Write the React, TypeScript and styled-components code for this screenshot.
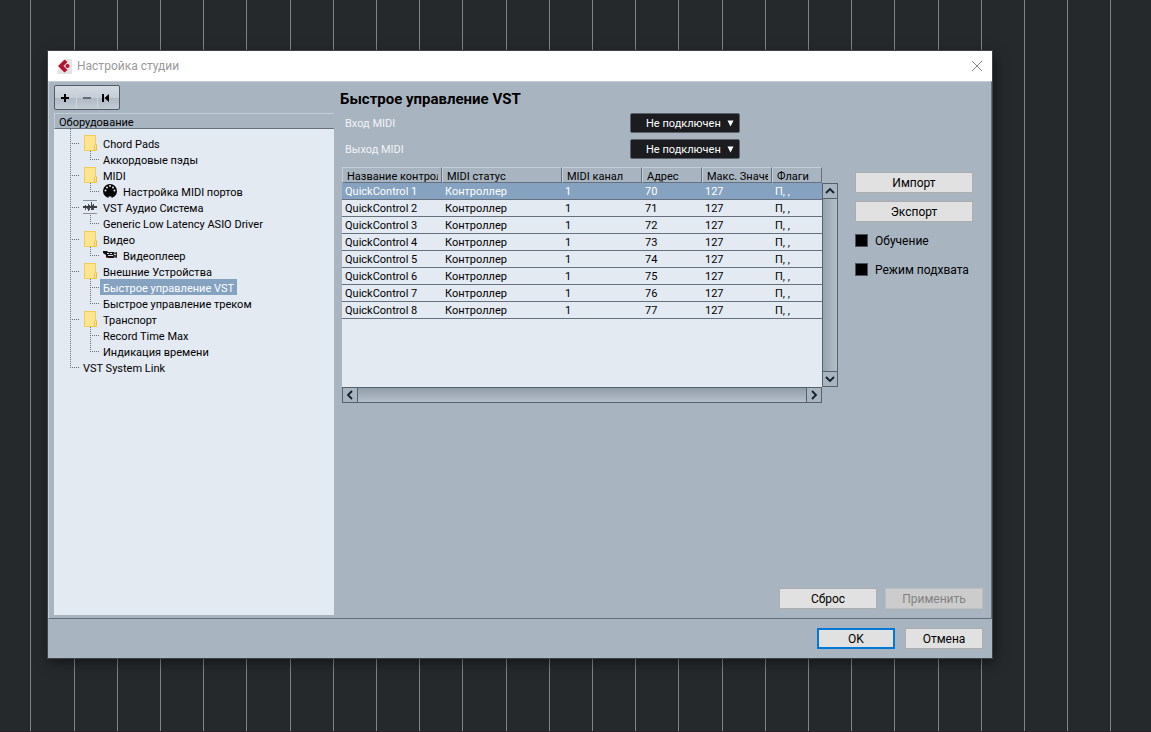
import React from "react";
import styled, { createGlobalStyle, css } from "styled-components";

const color = {
  panel: "#a8b4c0",
  field: "#e3eaf2",
  selected: "#85a2c0",
  light: "#c4ced8",
  dark: "#66717d",
};

const GlobalStyle = createGlobalStyle`
  * { box-sizing: border-box; }
  body {
    margin: 0;
    background: #25292c;
    color: #000;
    font-family: Roboto, "Noto Sans", sans-serif;
    font-size: 11px;
    line-height: 16px;
  }
  button, input, select { font: inherit; margin: 0; }
  ul { list-style: none; margin: 0; padding: 0; }
`;

const Desktop = styled.div`
  display: flex;
  min-height: 100vh;
  padding: 51px 159px 73px 48px;
  border-bottom: 1px solid #2c1e22;
  background: repeating-linear-gradient(
    to right,
    #808386 0 1px, transparent 1px 44px,
    #808386 44px 45px, transparent 45px 87px,
    #808386 87px 88px, transparent 88px 130px,
    #808386 130px 131px, transparent 131px 173px,
    #808386 173px 174px, transparent 174px 216px
  ) 30px 0 / 216px 100% repeat-x;
`;

const Dialog = styled.main`
  flex: 1;
  min-width: 0;
  display: flex;
  flex-direction: column;
  background: ${color.panel};
  box-shadow: 0 0 0 1px #3f4144, 2px 4px 12px rgba(0, 0, 0, 0.5);
`;

const TitleBar = styled.header`
  display: flex;
  align-items: center;
  height: 30px;
  padding: 0 9px;
  background: #fff;
`;

const Caption = styled.h1`
  flex: 1;
  margin: 0 0 0 5px;
  font-size: 12px;
  font-weight: 400;
  color: #999;
`;

const CloseButton = styled.button`
  display: flex;
  padding: 0;
  border: 0;
  background: none;
`;

const Body = styled.div`
  flex: 1;
  display: flex;
  gap: 6px;
  padding: 3px 8px 3px 5px;
  border: 1px solid ${color.light};
  border-right-color: ${color.dark};
  border-bottom-color: ${color.dark};
`;

const Sidebar = styled.section`
  display: flex;
  flex-direction: column;
  width: 280px;
`;

const Toolbar = styled.div`
  display: flex;
  align-self: flex-start;
  height: 25px;
  margin-bottom: 3px;
  border: 1px solid #525a64;
  border-radius: 2px;
  background: linear-gradient(#d3dae2, #c5cdd7 50%, #b0b9c4 54%, #c3cbd5);
`;

const ToolButton = styled.button`
  display: flex;
  align-items: center;
  justify-content: center;
  width: 21px;
  padding: 0;
  border: 0;
  background: none;
  & + & { border-left: 1px solid #cdd4dc; }
  &:last-child { width: 22px; padding-right: 6px; }
`;

const TreeHeading = styled.h2`
  height: 16px;
  margin: 0;
  padding-left: 4px;
  border: 1px solid ${color.light};
  border-right: 0;
  border-bottom-color: ${color.dark};
  font-size: 11px;
  line-height: 18px;
  font-weight: 400;
`;

const TreeBox = styled.div`
  flex: 1;
  padding-left: 16px;
  background: ${color.field};
`;

const dotsDown = "repeating-linear-gradient(to bottom, #66717d 0 1px, transparent 1px 2px)";
const dotsRight = "repeating-linear-gradient(to right, #66717d 0 1px, transparent 1px 2px)";

const TreeTop = styled.div`
  height: 6px;
  background: ${dotsDown} 0 0 / 1px 100% no-repeat;
`;

const TreeRow = styled.li`
  display: flex;
  height: 16px;
`;

const Trunk = styled.span`
  width: 20px;
  background: ${dotsDown} 0 0 / 1px 100% no-repeat;
`;

const Branch = styled.span<{ $last?: boolean }>`
  width: 10px;
  background:
    ${dotsDown} 0 0 / 1px ${(p) => (p.$last ? "9px" : "100%")} no-repeat,
    ${dotsRight} 0 8px / 100% 1px no-repeat;
`;

const IconSlot = styled.span`
  display: flex;
  width: 20px;
  padding-left: 3px;
  svg { display: block; }
`;

const NodeLabel = styled.span<{ $selected?: boolean }>`
  padding: 0 3px;
  white-space: nowrap;
  line-height: 20px;
  ${(p) => p.$selected && css`
    background: ${color.selected};
    color: #fff;
  `}
`;

const Content = styled.section`
  flex: 1;
  min-width: 0;
  display: flex;
  flex-direction: column;
`;

const PageTitle = styled.h2`
  margin: 4px 0;
  font-size: 15px;
  line-height: 20px;
  font-weight: 700;
`;

const Field = styled.div`
  display: flex;
  align-items: center;
  height: 20px;
  margin-bottom: 6px;
  padding-left: 5px;
`;

const FieldLabel = styled.label`
  width: 285px;
  padding-top: 2px;
  color: #f1f3f5;
`;

const SelectBox = styled.div`
  position: relative;
  width: 110px;
  height: 20px;
  svg {
    position: absolute;
    right: 6px;
    top: 7px;
    pointer-events: none;
  }
`;

const Select = styled.select`
  appearance: none;
  display: block;
  width: 100%;
  height: 100%;
  padding: 2px 0 0 15px;
  border: 1px solid #5a6067;
  border-radius: 2px;
  background: #1a1c20;
  color: #fff;
`;

const Columns = styled.div`
  display: flex;
  gap: 17px;
  margin-top: 2px;
  padding: 0 10px 0 2px;
`;

const ListFrame = styled.div`
  flex: 1;
  min-width: 0;
  display: grid;
  grid-template-columns: minmax(0, 1fr) 16px;
`;

const ListView = styled.div`
  height: 220px;
  background: ${color.field};
`;

const Table = styled.table`
  width: 100%;
  table-layout: fixed;
  border-collapse: separate;
  border-spacing: 0;
`;

const HeadCell = styled.th<{ $width?: number }>`
  width: ${(p) => (p.$width ? `${p.$width}px` : "auto")};
  height: 16px;
  padding: 0 3px 0 4px;
  overflow: hidden;
  white-space: nowrap;
  text-align: left;
  font-weight: 400;
  line-height: 14px;
  background: ${color.panel};
  border: 1px solid ${color.light};
  border-right-color: ${color.dark};
  border-bottom-color: ${color.dark};
  span { display: block; overflow: hidden; line-height: 18px; height: 14px; }
`;

const BodyRow = styled.tr<{ $selected?: boolean }>`
  ${(p) => p.$selected && css`
    background: ${color.selected};
    color: #fff;
  `}
`;

const Cell = styled.td`
  height: 17px;
  padding: 2px 3px 0;
  line-height: 14px;
  white-space: nowrap;
  border-bottom: 1px solid ${color.dark};
`;

const ScrollTrack = styled.div<{ $vertical?: boolean }>`
  display: flex;
  justify-content: space-between;
  border: 1px solid #57616c;
  ${(p) => p.$vertical
    ? css`
        flex-direction: column;
        margin-top: 16px;
        background: linear-gradient(to right, #97a3af, #b4bfca);
      `
    : css`
        height: 16px;
        background: linear-gradient(#919da9, #b4bfca);
      `}
`;

const ScrollButton = styled.button<{ $edge: "top" | "bottom" | "left" | "right" }>`
  display: flex;
  align-items: center;
  justify-content: center;
  width: ${(p) => (p.$edge === "left" || p.$edge === "right" ? "15px" : "14px")};
  height: ${(p) => (p.$edge === "left" || p.$edge === "right" ? "14px" : "15px")};
  padding: 0;
  border: 0 solid #57616c;
  background: #a8b4c0;
  ${(p) => p.$edge === "top" && "border-bottom-width: 1px;"}
  ${(p) => p.$edge === "bottom" && "border-top-width: 1px;"}
  ${(p) => p.$edge === "left" && "border-right-width: 1px;"}
  ${(p) => p.$edge === "right" && "border-left-width: 1px;"}
`;

const Side = styled.div`
  display: flex;
  flex-direction: column;
  gap: 8px;
  width: 118px;
  padding-top: 5px;
`;

const PushButton = styled.button<{ $width?: number; $primary?: boolean }>`
  width: ${(p) => (p.$width ? `${p.$width}px` : "100%")};
  height: 21px;
  padding: 0;
  border: ${(p) => (p.$primary ? "2px solid #0078d7" : "1px solid #adadad")};
  background: #e1e1e1;
  color: #000;
  font-size: 12px;
  line-height: 16px;
  &:disabled {
    border-color: #bfbfbf;
    background: #ccc;
    color: #838383;
  }
`;

const CheckLabel = styled.label`
  display: flex;
  align-items: center;
  gap: 7px;
  height: 21px;
  font-size: 12px;
  white-space: nowrap;
`;

const CheckBox = styled.input`
  appearance: none;
  flex: none;
  width: 13px;
  height: 13px;
  border: 1px solid #4b545d;
  background: #000;
`;

const ButtonBar = styled.div<{ $gap: number }>`
  display: flex;
  justify-content: flex-end;
  gap: ${(p) => p.$gap}px;
`;

const ApplyBar = styled(ButtonBar)`
  margin-top: auto;
  margin-bottom: 6px;
`;

const Footer = styled.footer`
  padding: 9px 9px 9px 0;
`;

const Logo = () => (
  <svg width="15" height="15" viewBox="0 0 15 15" aria-hidden="true">
    <path d="M9 0h6v15H0v-3z" fill="#e4e4e6" />
    <path d="M7.500.5 1 7l6.500 6.500L10.500 11 6.500 7l4-4z" fill="#b5122f" />
    <circle cx="10.500" cy="7" r="2" fill="#b5122f" />
  </svg>
);

const FolderIcon = () => (
  <svg width="14" height="16" viewBox="0 0 14 16" aria-hidden="true">
    <rect x="1.500" y=".5" width="11" height="15" fill="#ffe591" stroke="#f0cd58" />
    <path d="M11.500 15.500v-5l1-1h1v6z" fill="#ffe591" stroke="#edc23e" />
  </svg>
);

const MidiIcon = () => (
  <svg width="15" height="16" viewBox="0 0 15 16" aria-hidden="true">
    <circle cx="7" cy="8" r="7" fill="#050505" />
    <g fill="#e3eaf2">
      <circle cx="2.500" cy="7.500" r="1" />
      <circle cx="4" cy="4.500" r="1" />
      <circle cx="7" cy="3" r="1" />
      <circle cx="10" cy="4.500" r="1" />
      <circle cx="11.500" cy="7.500" r="1" />
      <path d="M5.500 13.500h3V15h-3z" />
    </g>
  </svg>
);

const WaveIcon = () => (
  <svg width="14" height="16" viewBox="0 0 14 16" aria-hidden="true">
    <path d="M0 1.500h14M0 14.500h14" stroke="#8b9096" />
    <path d="M2.500 6v5M4.500 7v3M5.500 5v7M6.500 6v5M8.500 3v8M9.500 6v5M10.500 5v6M12.500 7v2" stroke="#4a4e52" />
    <path d="M0 8h14" stroke="#3c4044" strokeWidth="2" />
  </svg>
);

const CameraIcon = () => (
  <svg width="15" height="16" viewBox="0 0 15 16" aria-hidden="true">
    <path d="M0 4h4l1 1h6v6H3V8L0 6z" fill="#111" />
    <path d="M10 6 14 5v6l-4-1z" fill="#333" />
    <path d="M4 6.500h2M7 6.500h2M5 8.500h5M11 7.500h2" stroke="#d8dde3" />
    <path d="M3 10.500h2" stroke="#c0392b" />
  </svg>
);

const chevrons = {
  top: "M1 7l4-4 4 4",
  bottom: "M1 3l4 4 4-4",
  left: "M7 1 3 5l4 4",
  right: "M3 1l4 4-4 4",
};

const Chevron = ({ edge }: { edge: keyof typeof chevrons }) => (
  <svg width="10" height="10" viewBox="0 0 10 10" aria-hidden="true">
    <path d={chevrons[edge]} fill="none" stroke="#14202c" strokeWidth="1.800" />
  </svg>
);

const CaretIcon = () => (
  <svg width="7" height="7" viewBox="0 0 7 7" aria-hidden="true">
    <path d="M.5.5h6l-3 6z" fill="#fff" />
  </svg>
);

type Node = {
  label: string;
  icon?: React.ReactNode;
  child?: boolean;
  last?: boolean;
  selected?: boolean;
};

const nodes: Node[] = [
  { label: "Chord Pads", icon: <FolderIcon /> },
  { label: "Аккордовые пэды", child: true, last: true },
  { label: "MIDI", icon: <FolderIcon /> },
  { label: "Настройка MIDI портов", icon: <MidiIcon />, child: true, last: true },
  { label: "VST Аудио Система", icon: <WaveIcon /> },
  { label: "Generic Low Latency ASIO Driver", child: true, last: true },
  { label: "Видео", icon: <FolderIcon /> },
  { label: "Видеоплеер", icon: <CameraIcon />, child: true, last: true },
  { label: "Внешние Устройства", icon: <FolderIcon /> },
  { label: "Быстрое управление VST", child: true, selected: true },
  { label: "Быстрое управление треком", child: true, last: true },
  { label: "Транспорт", icon: <FolderIcon /> },
  { label: "Record Time Max", child: true },
  { label: "Индикация времени", child: true, last: true },
  { label: "VST System Link", last: true },
];

const columns: { title: string; width?: number }[] = [
  { title: "Название контрол", width: 100 },
  { title: "MIDI статус", width: 120 },
  { title: "MIDI канал", width: 80 },
  { title: "Адрес", width: 60 },
  { title: "Макс. Значе", width: 70 },
  { title: "Флаги" },
];

const controls = [70, 71, 72, 73, 74, 75, 76, 77];

const ports = [
  { id: "midi-in", label: "Вход MIDI" },
  { id: "midi-out", label: "Выход MIDI" },
];

export default function App() {
  return (
    <>
      <GlobalStyle />
      <Desktop>
        <Dialog>
          <TitleBar>
            <Logo />
            <Caption>Настройка студии</Caption>
            <CloseButton aria-label="Закрыть">
              <svg width="12" height="12" viewBox="0 0 12 12" aria-hidden="true">
                <path d="M1 1l10 10M11 1 1 11" stroke="#888" />
              </svg>
            </CloseButton>
          </TitleBar>

          <Body>
            <Sidebar>
              <Toolbar>
                <ToolButton aria-label="Добавить">
                  <svg width="9" height="9" viewBox="0 0 9 9"><path d="M4 1v8M0 5h8" stroke="#000" strokeWidth="2" /></svg>
                </ToolButton>
                <ToolButton aria-label="Удалить">
                  <svg width="9" height="9" viewBox="0 0 9 9"><path d="M0 5h8" stroke="#636b74" strokeWidth="2" /></svg>
                </ToolButton>
                <ToolButton aria-label="Сброс устройства">
                  <svg width="9" height="9" viewBox="0 0 9 9"><path d="M1 1h2v8H1zM8 1v8L3.500 5z" fill="#000" /></svg>
                </ToolButton>
              </Toolbar>
              <TreeHeading>Оборудование</TreeHeading>
              <TreeBox>
                <TreeTop />
                <ul role="tree" aria-label="Оборудование">
                  {nodes.map((n) => (
                    <TreeRow key={n.label} role="treeitem" aria-level={n.child ? 2 : 1} aria-selected={!!n.selected}>
                      {n.child && <Trunk />}
                      <Branch $last={n.last} />
                      {n.icon && <IconSlot>{n.icon}</IconSlot>}
                      <NodeLabel $selected={n.selected}>{n.label}</NodeLabel>
                    </TreeRow>
                  ))}
                </ul>
              </TreeBox>
            </Sidebar>

            <Content>
              <PageTitle>Быстрое управление VST</PageTitle>
              {ports.map((p) => (
                <Field key={p.id}>
                  <FieldLabel htmlFor={p.id}>{p.label}</FieldLabel>
                  <SelectBox>
                    <Select id={p.id}>
                      <option>Не подключен</option>
                    </Select>
                    <CaretIcon />
                  </SelectBox>
                </Field>
              ))}

              <Columns>
                <ListFrame>
                  <ListView>
                    <Table>
                      <thead>
                        <tr>
                          {columns.map((c) => (
                            <HeadCell key={c.title} $width={c.width} scope="col"><span>{c.title}</span></HeadCell>
                          ))}
                        </tr>
                      </thead>
                      <tbody>
                        {controls.map((address, i) => (
                          <BodyRow key={address} $selected={i === 0}>
                            <Cell>QuickControl {i + 1}</Cell>
                            <Cell>Контроллер</Cell>
                            <Cell>1</Cell>
                            <Cell>{address}</Cell>
                            <Cell>127</Cell>
                            <Cell>П, ,</Cell>
                          </BodyRow>
                        ))}
                      </tbody>
                    </Table>
                  </ListView>
                  <ScrollTrack $vertical>
                    <ScrollButton $edge="top" aria-label="Вверх"><Chevron edge="top" /></ScrollButton>
                    <ScrollButton $edge="bottom" aria-label="Вниз"><Chevron edge="bottom" /></ScrollButton>
                  </ScrollTrack>
                  <ScrollTrack>
                    <ScrollButton $edge="left" aria-label="Влево"><Chevron edge="left" /></ScrollButton>
                    <ScrollButton $edge="right" aria-label="Вправо"><Chevron edge="right" /></ScrollButton>
                  </ScrollTrack>
                </ListFrame>

                <Side>
                  <PushButton>Импорт</PushButton>
                  <PushButton>Экспорт</PushButton>
                  <CheckLabel><CheckBox type="checkbox" />Обучение</CheckLabel>
                  <CheckLabel><CheckBox type="checkbox" />Режим подхвата</CheckLabel>
                </Side>
              </Columns>

              <ApplyBar $gap={8}>
                <PushButton $width={98}>Сброс</PushButton>
                <PushButton $width={98} disabled>Применить</PushButton>
              </ApplyBar>
            </Content>
          </Body>

          <Footer>
            <ButtonBar $gap={10}>
              <PushButton $width={78} $primary>OK</PushButton>
              <PushButton $width={78}>Отмена</PushButton>
            </ButtonBar>
          </Footer>
        </Dialog>
      </Desktop>
    </>
  );
}
